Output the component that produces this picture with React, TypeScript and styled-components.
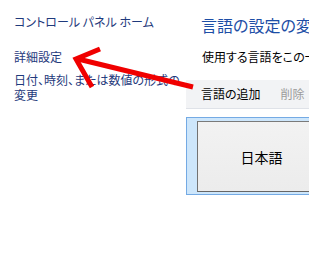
import React from "react";
import styled, { createGlobalStyle } from "styled-components";

const GlobalStyle = createGlobalStyle`
  html, body { margin: 0; padding: 0; background: #ffffff; overflow: hidden; }
  body {
    font-family: "Noto Sans CJK JP", "Noto Sans", sans-serif;
    font-feature-settings: "palt";
  }
`;

const Page = styled.div`
  position: relative;
  width: 309px;
  height: 255px;
  overflow: hidden;
  display: flex;
  background: #ffffff;
`;

const LeftPane = styled.nav`
  flex: none;
  width: 186px;
  box-sizing: border-box;
  padding: 14px 0 0 14px;
  display: flex;
  flex-direction: column;
  gap: 8px;
`;

const NavLink = styled.a<{ $home?: boolean }>`
  display: block;
  font-size: 12px;
  line-height: 15px;
  color: #1f3a7c;
  text-decoration: none;
  white-space: nowrap;
  margin-bottom: ${(p) => (p.$home ? "12px" : "0")};
`;

const MainPane = styled.main`
  flex: none;
  width: 420px;
  display: flex;
  flex-direction: column;
`;

const Title = styled.h1`
  margin: 14px 0 0 15px;
  font-size: 16px;
  font-weight: normal;
  line-height: 22px;
  color: #1d4ea6;
  white-space: nowrap;
`;

const Intro = styled.p`
  margin: 13px 0 0 16px;
  font-size: 12px;
  line-height: 16px;
  color: #000000;
  white-space: nowrap;
`;

const Toolbar = styled.div`
  margin-top: 15px;
  height: 28px;
  background: #f2f3f5;
  border-bottom: 1px solid #dfe2e8;
  display: flex;
  align-items: center;
  gap: 20px;
  padding-left: 15px;
`;

const ToolButton = styled.span<{ $disabled?: boolean }>`
  font-size: 12px;
  line-height: 16px;
  color: ${(p) => (p.$disabled ? "#9b9b9b" : "#000000")};
  white-space: nowrap;
`;

const LanguageList = styled.div`
  margin-top: 8px;
  display: flex;
`;

const SelectedRow = styled.div`
  flex: none;
  width: 300px;
  background: #cde6fb;
  border: 1px solid #74aae4;
  padding: 3px 0 2px 10px;
`;

const LanguageTile = styled.div`
  width: 127px;
  height: 69px;
  border: 1px solid #666666;
  border-top-color: #7a7a7a;
  border-left-color: #727272;
  background: linear-gradient(#f2f2f2, #ececec);
  display: flex;
  align-items: center;
  justify-content: center;
  font-size: 14px;
  line-height: 18px;
  color: #000000;
`;

const ArrowLayer = styled.svg`
  position: absolute;
  left: 0;
  top: 0;
  pointer-events: none;
`;

export default function App() {
  return (
    <>
      <GlobalStyle />
      <Page>
        <LeftPane>
          <NavLink $home>コントロール パネル ホーム</NavLink>
          <NavLink>詳細設定</NavLink>
          <NavLink>
            日付、時刻、または数値の形式の
            <br />
            変更
          </NavLink>
        </LeftPane>
        <MainPane>
          <Title>言語の設定の変更</Title>
          <Intro>使用する言語をこの一覧に追加してください。</Intro>
          <Toolbar>
            <ToolButton>言語の追加</ToolButton>
            <ToolButton $disabled>削除</ToolButton>
          </Toolbar>
          <LanguageList>
            <SelectedRow>
              <LanguageTile>日本語</LanguageTile>
            </SelectedRow>
          </LanguageList>
        </MainPane>
        <ArrowLayer width="309" height="255" viewBox="0 0 309 255">
          <g stroke="#f00000" strokeWidth="5" fill="none" strokeLinecap="butt">
            <line x1="78" y1="59" x2="193" y2="87" />
            <polyline points="100,49 76,59 92,87" strokeLinejoin="miter" />
          </g>
        </ArrowLayer>
      </Page>
    </>
  );
}
